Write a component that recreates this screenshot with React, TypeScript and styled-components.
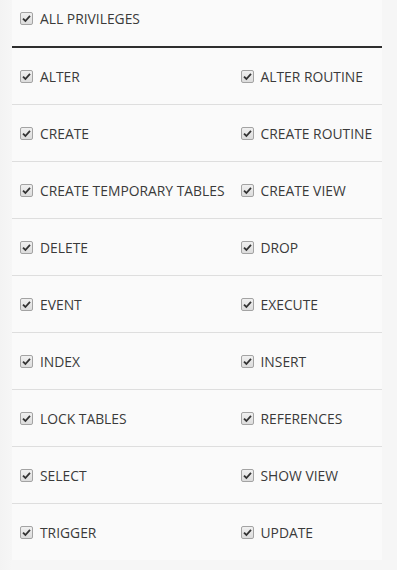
import React from "react";
import styled, { createGlobalStyle } from "styled-components";

const GlobalStyle = createGlobalStyle`
    html, body {
        margin: 0;
        padding: 0;
        background: #f4f4f4;
    }
    body {
        font-family: "Open Sans", "Liberation Sans", sans-serif;
    }
`;

const StyledPage = styled.div(() => ({
    width: "397px",
    height: "570px",
    display: "flex",
    flexDirection: "column",
    background: "linear-gradient(to right, #f3f3f3 0px, #f6f6f6 12px, #f6f6f6 100%)",
}));

const StyledPanel = styled.div(() => ({
    margin: "0 15px 0 12px",
    background: "#fafafa",
    display: "flex",
    flexDirection: "column",
}));

const StyledAllRow = styled.label(() => ({
    display: "flex",
    alignItems: "center",
    gap: "7px",
    padding: "9px 8px 19px 8px",
    height: "18px",
    borderBottom: "2px solid #2e2e2e",
    fontSize: "13.85px",
    color: "#3a3a3a",
}));

const StyledGrid = styled.div(() => ({
    display: "grid",
    gridTemplateColumns: "auto 1fr",
}));

const StyledCell = styled.label<{ last: boolean }>((props) => ({
    display: "flex",
    alignItems: "center",
    gap: "7px",
    height: "56px",
    padding: "0 8px",
    borderBottom: props.last ? "none" : "1px solid #dedede",
    fontSize: "13.85px",
    color: "#3a3a3a",
    whiteSpace: "nowrap",
}));

const StyledBox = styled.span(() => ({
    display: "inline-flex",
    alignItems: "center",
    justifyContent: "center",
    width: "11px",
    height: "11px",
    border: "1px solid #a3a3a3",
    borderRadius: "2px",
    background: "linear-gradient(#f0f0f0, #dcdcdc)",
    flexShrink: 0,
}));

const Check: React.FC = () => (
    <StyledBox>
        <svg width="9" height="9" viewBox="0 0 9 9">
            <path d="M1 4.6 L3.4 7 L8 1.8" fill="none" stroke="#333" strokeWidth="1.8" />
        </svg>
    </StyledBox>
);

const privileges: [string, string][] = [
    ["ALTER", "ALTER ROUTINE"],
    ["CREATE", "CREATE ROUTINE"],
    ["CREATE TEMPORARY TABLES", "CREATE VIEW"],
    ["DELETE", "DROP"],
    ["EVENT", "EXECUTE"],
    ["INDEX", "INSERT"],
    ["LOCK TABLES", "REFERENCES"],
    ["SELECT", "SHOW VIEW"],
    ["TRIGGER", "UPDATE"],
];

const App: React.FC = () => {
    return (
        <StyledPage>
            <GlobalStyle />
            <StyledPanel>
                <StyledAllRow>
                    <Check />
                    <span>ALL PRIVILEGES</span>
                </StyledAllRow>
                <StyledGrid>
                    {privileges.map((pair, i) => (
                        <React.Fragment key={pair[0]}>
                            {pair.map(name => (
                                <StyledCell key={name} last={i === privileges.length - 1}>
                                    <Check />
                                    <span>{name}</span>
                                </StyledCell>
                            ))}
                        </React.Fragment>
                    ))}
                </StyledGrid>
            </StyledPanel>
        </StyledPage>
    )
}

export default App;
